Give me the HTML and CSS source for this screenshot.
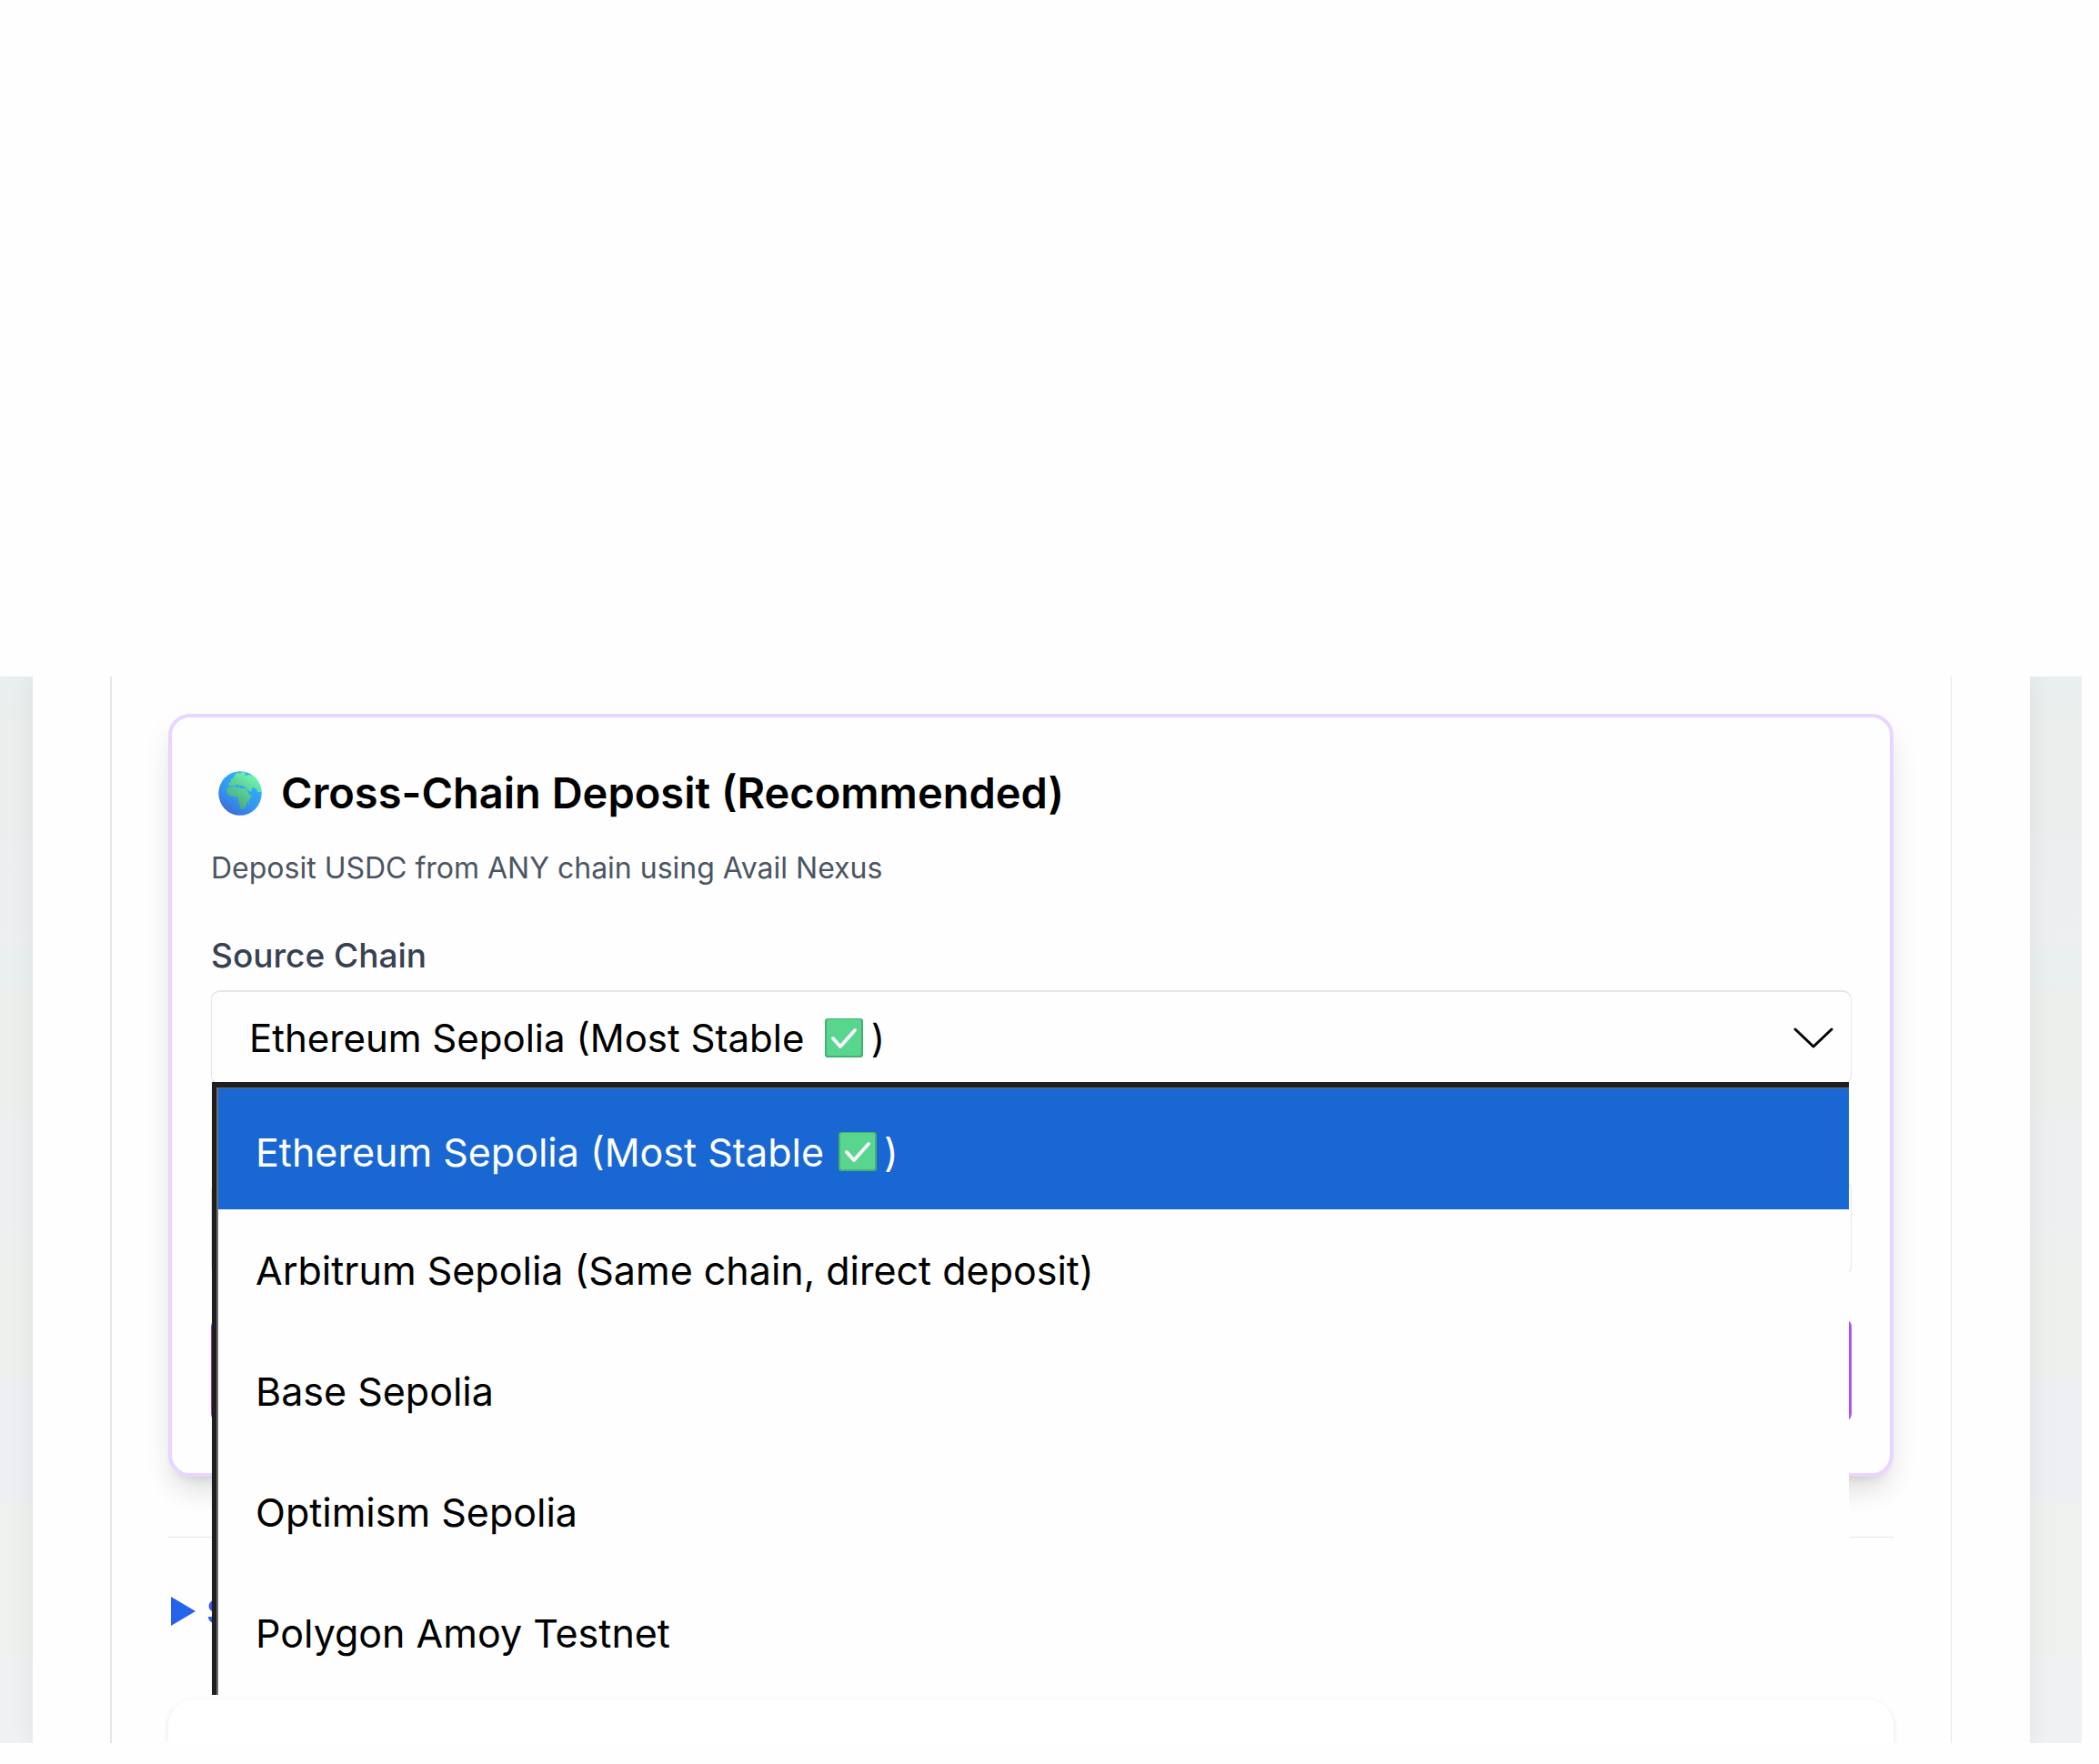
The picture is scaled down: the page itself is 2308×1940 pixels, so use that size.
FILE: index.html
```
<!DOCTYPE html>
<html lang="en">
<head>
<meta charset="utf-8">
<title>Cross-Chain Deposit</title>
<link rel="stylesheet" href="styles.css">
</head>
<body>
<svg width="0" height="0" class="sprites" aria-hidden="true">
  <symbol id="check" viewBox="0 0 42 43"><rect width="42" height="43" rx="3" fill="#45b074"/><rect x="2" y="1" width="38" height="40" rx="2" fill="#59d68e"/><path d="M9 22l8 9 16-18" fill="none" stroke="#f8effc" stroke-width="4" stroke-linecap="round" stroke-linejoin="round"/></symbol>
</svg>
<main class="viewport">
  <div class="panel">
    <div class="column">
      <section class="card">
        <h2 class="card-title">
          <svg class="globe" viewBox="0 0 48 49" aria-hidden="true">
            <defs>
              <linearGradient id="sea" x1="0.2" y1="1" x2="0.7" y2="0.2"><stop offset="0" stop-color="#4264d2"/><stop offset=".45" stop-color="#3393ee"/><stop offset="1" stop-color="#2fb0ff"/></linearGradient>
              <linearGradient id="land" x1="0.2" y1="1" x2="0.8" y2="0"><stop offset="0" stop-color="#469f78"/><stop offset=".6" stop-color="#5dd79b"/><stop offset="1" stop-color="#7affb0"/></linearGradient>
              <clipPath id="disc"><ellipse cx="24" cy="24.500" rx="23.700" ry="24.300"/></clipPath>
            </defs>
            <g clip-path="url(#disc)">
              <rect width="48" height="49" fill="url(#sea)"/>
              <path fill="url(#land)" d="M19 4l2-3 2 2 3-2 4 1-1 3 5-1 7 2 6 8v9l-4 0-1-3-3-2-2 1-1 4-4-2-2-3-4-2-3 0-4-1-1 2-3-1-3 1-1-4 3-1 0-3 3-2 1-3 3 0zM11 18l6-1 5 1 3 1 5 0 2 3 2 4 3 1-3 5-3 3 0 3-3 4h-3l-2-6-1-4 0-3-5-1-5-1-3-4 1-4z"/>
              <path fill="#51c58f" d="M33 34h1v3h-1z"/>
            </g>
          </svg>
          <span>Cross-Chain Deposit (Recommended)</span>
        </h2>
        <p class="card-note">Deposit USDC from ANY chain using Avail Nexus</p>
        <label class="label" for="chain">Source Chain</label>
        <div class="picker">
          <select class="field" id="chain"><option>Ethereum Sepolia (Most Stable&nbsp;&emsp;&nbsp;&thinsp;)</option></select>
          <svg class="check field-check" aria-hidden="true"><use href="#check"/></svg>
          <svg class="chevron" viewBox="0 0 44 24" aria-hidden="true"><path d="M2 2l20 19L42 2" fill="none" stroke="#000" stroke-width="3" stroke-linecap="round" stroke-linejoin="round"/></svg>
          <ul class="menu" role="listbox">
            <li class="option active" role="option" aria-selected="true"><span>Ethereum Sepolia (Most Stable</span><svg class="check" aria-hidden="true"><use href="#check"/></svg><span>)</span></li>
            <li class="option" role="option">Arbitrum Sepolia (Same chain, direct deposit)</li>
            <li class="option" role="option">Base Sepolia</li>
            <li class="option" role="option">Optimism Sepolia</li>
            <li class="option" role="option">Polygon Amoy Testnet</li>
          </ul>
        </div>
        <input class="field amount" type="text">
        <button class="submit" type="button"></button>
      </section>
      <details class="more">
        <summary class="more-title"><svg class="marker" viewBox="0 0 27 32" aria-hidden="true"><path d="M0 0l27 16L0 32z" fill="#2563eb"/></svg>S</summary>
      </details>
      <section class="next-card"></section>
    </div>
  </div>
</main>
</body>
</html>
```
FILE: styles.css
```
* { box-sizing: border-box; }

body {
  margin: 0;
  background: #fefefe;
  color: #000;
  font-family: Inter, "Liberation Sans", sans-serif;
}

.sprites { position: absolute; }

.viewport {
  margin: 744px 19px 0 0;
  overflow: hidden;
  background: linear-gradient(#e9eeee 0, #e9eeee 36px, #ebeeec 50px, #ebeeec 170px, #edeef0 180px, #eeeff1 292px, #eaefef 304px, #eaefef 338px, #edefed 348px, #edefed 480px, #eeeff1 490px, #eeeff1 600px, #eef0ee 640px, #eef0ee 770px, #eeeff2 776px, #eeeff2 900px, #eff1ef 910px, #eff1ef 1075px, #f0f1f3 1085px);
}

.panel {
  margin: 0 57px 0 36px;
  padding: 0 86px 0 85px;
  background: #fefefe;
  box-shadow: 0 0 24px 4px rgba(0, 0, 0, 0.05);
}

.column {
  padding: 41px 63px 0 62px;
  border: solid #e5e5e9;
  border-width: 0 1px 0 2px;
}

.card {
  padding: 39px 42px 57px 43px;
  border: 4px solid #e9d5ff;
  border-radius: 24px;
  background: #fefefe;
  box-shadow: 0 20px 30px -6px rgba(0, 0, 0, 0.1), 0 8px 12px -8px rgba(0, 0, 0, 0.12), 0 12px 40px rgba(0, 0, 0, 0.04);
}

.card-title {
  display: flex;
  align-items: center;
  gap: 21px;
  margin: 0;
  padding-left: 8px;
  font-size: 47px;
  font-weight: 600;
  line-height: 88px;
}

.globe { width: 48px; height: 49px; }

.card-note {
  margin: 15px 0 0;
  color: #4b5563;
  font-size: 32px;
  line-height: 48px;
}

.label {
  display: block;
  margin-top: 44px;
  color: #374151;
  font-size: 37px;
  font-weight: 500;
  line-height: 56px;
}

.picker { position: relative; margin-top: 10px; }

.field {
  display: block;
  width: 100%;
  height: 104px;
  padding: 0 41px;
  border: solid #e5e5ea;
  border-width: 2px 1px;
  border-radius: 10px;
  background: #fefefe;
  color: #000;
  appearance: none;
  font-family: inherit;
  font-size: 42px;
}

.amount { margin-top: 106px; }

.chevron {
  position: absolute;
  top: 41px;
  right: 20px;
  width: 44px;
  height: 24px;
}

.menu {
  position: absolute;
  top: 101px;
  left: 1px;
  right: 3px;
  margin: 0;
  padding: 0 0 2px;
  border: solid #1f1f1f;
  border-width: 6px 0 0 5px;
  background: #fefefe;
  box-shadow: inset 2px 1px #6e6e6e;
  list-style: none;
}

.option {
  display: flex;
  align-items: center;
  height: 133px;
  padding-left: 43px;
  font-size: 43px;
}

.active {
  height: 134px;
  margin-left: 2px;
  padding: 6px 0 0 41px;
  border-top: 1px solid #6e6e6e;
  background: #1967d2;
  color: #fff;
}

.check { width: 42px; height: 43px; margin: 0 8px 0 16px; }

.field-check {
  position: absolute;
  top: 31px;
  left: 675px;
  margin: 0;
}

.submit {
  display: block;
  width: 100%;
  height: 112px;
  margin-top: 48px;
  border: 0;
  border-radius: 8px;
  background: linear-gradient(90deg, #9333ea, #a855f7);
}

.more {
  margin-top: 66px;
  padding-top: 53px;
  border-top: 1px solid #e5e7eb;
}

.more-title {
  display: flex;
  align-items: center;
  gap: 12px;
  padding-left: 3px;
  color: #2563eb;
  font-size: 36px;
  font-weight: 500;
  line-height: 56px;
  list-style: none;
}

.marker { width: 27px; height: 32px; }

.next-card {
  height: 48px;
  margin-top: 69px;
  border-radius: 28px 28px 0 0;
  background: #fff;
  box-shadow: 0 2px 6px rgba(0, 0, 0, 0.1);
}
```
